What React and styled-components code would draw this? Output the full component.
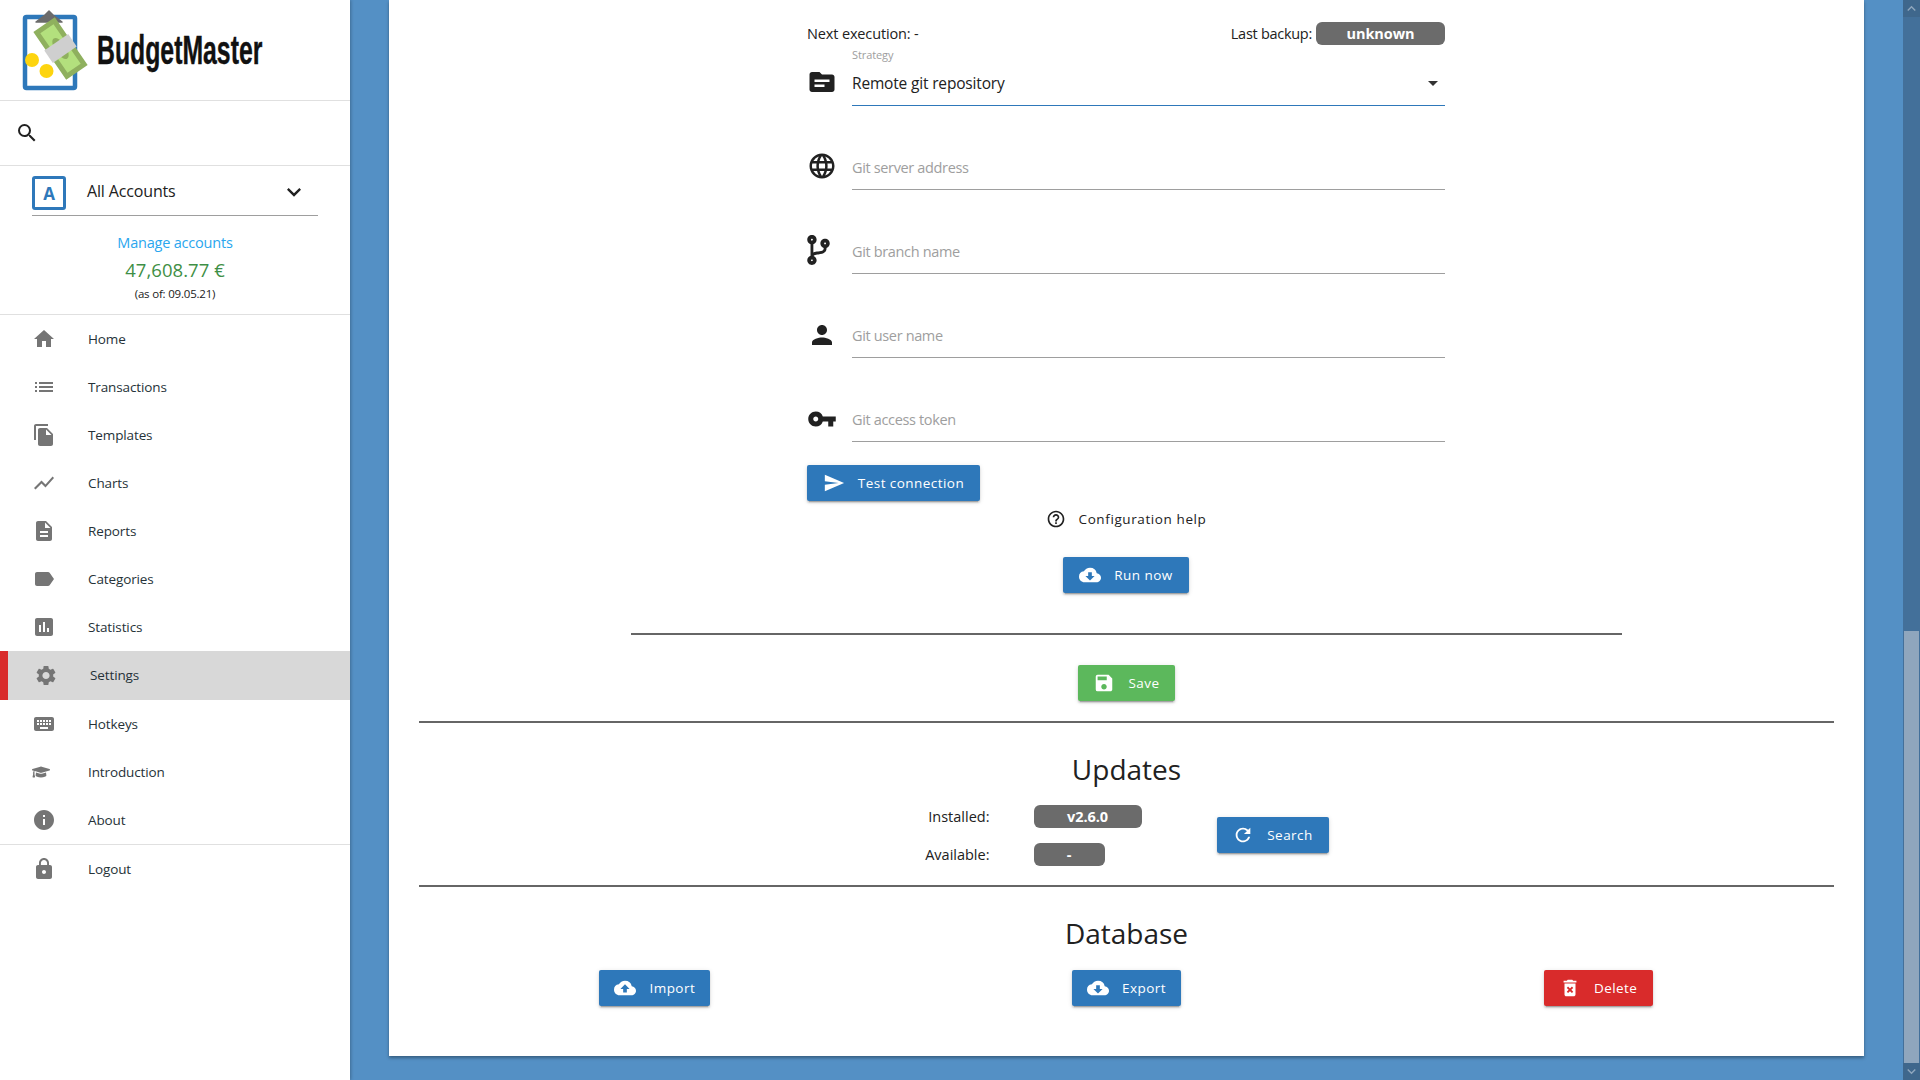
import React from "react";
import styled, { createGlobalStyle } from "styled-components";
import {
  MdHome, MdList, MdFileCopy, MdShowChart, MdDescription, MdLabel, MdAssessment, MdSettings,
  MdKeyboard, MdInfo, MdLock, MdTopic, MdLanguage, MdPerson, MdVpnKey, MdSend,
  MdHelpOutline, MdCloudDownload, MdCloudUpload, MdSave, MdRefresh, MdDeleteForever, MdSearch,
  MdExpandMore, MdArrowDropDown, MdKeyboardArrowUp, MdKeyboardArrowDown,
} from "react-icons/md";
import { FaCodeBranch, FaGraduationCap } from "react-icons/fa";

const Global = createGlobalStyle`
  html, body { margin: 0; padding: 0; height: 100%; overflow: hidden; }
  body { font-family: "Open Sans", "Noto Sans", sans-serif; color: #212121; }
  * { box-sizing: border-box; }
`;

const Page = styled.div`
  display: flex;
  width: 1920px;
  height: 1080px;
  overflow: hidden;
  background: #5490c5;
`;

const Sidebar = styled.aside`
  width: 350px;
  flex: none;
  background: #fff;
  display: flex;
  flex-direction: column;
  box-shadow: 1px 0 3px rgba(0, 0, 0, 0.25);
  z-index: 1;
`;

const LogoBar = styled.div`
  height: 101px;
  flex: none;
  display: flex;
  align-items: flex-start;
  border-bottom: 1px solid #e0e0e0;
`;

const LogoName = styled.span`
  font-family: "Liberation Sans", sans-serif;
  font-weight: 700;
  font-size: 40px;
  line-height: 40px;
  color: #111;
  margin: 30px 0 0 -23px;
  transform: scaleX(0.62);
  transform-origin: left center;
  white-space: nowrap;
  -webkit-text-stroke: 0.4px #111;
`;

const SearchBar = styled.div`
  height: 65px;
  flex: none;
  display: flex;
  align-items: center;
  padding-left: 15px;
  border-bottom: 1px solid #e0e0e0;
  color: #212121;
`;

const AccountBox = styled.div`
  height: 149px;
  flex: none;
  border-bottom: 1px solid #e0e0e0;
  display: flex;
  flex-direction: column;
  align-items: center;
`;

const AccountSelect = styled.div`
  width: 286px;
  height: 40px;
  margin-top: 10px;
  display: flex;
  align-items: flex-start;
  border-bottom: 1px solid #9e9e9e;
`;

const AccountBadge = styled.div`
  width: 34px;
  height: 34px;
  border: 3px solid #2e78ba;
  border-radius: 3px;
  color: #2e78ba;
  font-weight: 700;
  font-size: 17px;
  display: flex;
  align-items: center;
  justify-content: center;
`;

const AccountName = styled.span`
  margin-left: 21px;
  font-size: 16px;
  letter-spacing: -0.15px;
  line-height: 30px;
  flex: 1;
`;

const AccountChevron = styled.span`
  display: flex;
  margin: 2px 10px 0 0;
`;

const ManageLink = styled.a`
  margin-top: 17px;
  font-size: 14.5px;
  line-height: 20px;
  color: #2aa6ee;
  letter-spacing: -0.2px;
`;

const Balance = styled.div`
  margin-top: 4px;
  font-size: 18.5px;
  line-height: 26px;
  color: #3f8f46;
  letter-spacing: 0.05px;
`;

const AsOf = styled.div`
  margin-top: 3px;
  font-size: 11.5px;
  line-height: 16px;
  letter-spacing: -0.2px;
`;

const Nav = styled.nav`
  display: flex;
  flex-direction: column;
`;

const NavItem = styled.div`
  height: ${(p) => (p.$active ? "49px" : "48px")};
  display: flex;
  align-items: center;
  padding-left: ${(p) => (p.$active ? "26px" : "32px")};
  padding-bottom: ${(p) => (p.$active ? "1px" : "0")};
  background: ${(p) => (p.$active ? "#d8d8d8" : "transparent")};
  border-left: ${(p) => (p.$active ? "8px solid #d92b2b" : "none")};
  border-top: ${(p) => (p.$divided ? "1px solid #e0e0e0" : "none")};
  color: #757575;
`;

const NavIcon = styled.span`
  width: 24px;
  flex: none;
  display: flex;
  justify-content: ${(p) => (p.$small ? "flex-start" : "center")};
`;

const NavLabel = styled.span`
  margin-left: 32px;
  font-size: 13.5px;
  letter-spacing: -0.12px;
  font-weight: 500;
  color: #263238;
`;

const Main = styled.main`
  flex: 1;
  min-width: 0;
  height: 1080px;
  padding: 0 39px 24px;
`;

const Card = styled.section`
  height: 100%;
  background: #fff;
  padding: 22px 30px 0;
  box-shadow: 0 2px 3px rgba(0, 0, 0, 0.35);
  display: flex;
  flex-direction: column;
  align-items: center;
`;

const Form = styled.div`
  width: 638px;
  margin-right: 1px;
  display: flex;
  flex-direction: column;
`;

const StatusRow = styled.div`
  height: 23px;
  display: flex;
  align-items: center;
  justify-content: space-between;
  font-size: 14.5px;
  letter-spacing: -0.28px;
`;

const NextExecution = styled.span`
  letter-spacing: -0.14px;
`;

const LastBackup = styled.div`
  display: flex;
  align-items: center;
  gap: 4px;
`;

const Pill = styled.span`
  display: flex;
  align-items: center;
  justify-content: center;
  width: ${(p) => p.$w}px;
  height: 23px;
  background: #6b6b6b;
  border-radius: 6px;
  color: #fff;
  font-weight: 700;
  font-size: 14.5px;
  letter-spacing: -0.1px;
`;

const Field = styled.div`
  height: 61px;
  margin-top: ${(p) => (p.$first ? 0 : 23)}px;
  display: flex;
  align-items: flex-end;
`;

const FieldIcon = styled.div`
  width: 45px;
  height: ${(p) => p.$h || 50}px;
  flex: none;
  display: flex;
  align-items: flex-start;
  color: #212121;
`;

const BranchIcon = styled(FaCodeBranch)`
  width: 23px;
  height: 30px;
`;

const FieldBody = styled.div`
  flex: 1;
  height: 100%;
  display: flex;
  flex-direction: column;
  justify-content: flex-end;
`;

const FieldLabel = styled.div`
  font-size: 11px;
  color: #9e9e9e;
  line-height: 15px;
  letter-spacing: -0.1px;
  margin-bottom: 1px;
`;

const FieldLine = styled.div`
  height: 43px;
  display: flex;
  align-items: center;
  justify-content: space-between;
  border-bottom: 1px solid ${(p) => (p.$focus ? "#2e78ba" : "#9e9e9e")};
  font-size: ${(p) => (p.$placeholder ? "14.5px" : "15.5px")};
  letter-spacing: ${(p) => (p.$placeholder ? "-0.35px" : "-0.17px")};
  color: ${(p) => (p.$placeholder ? "#9e9e9e" : "#212121")};
  padding-bottom: ${(p) => (p.$placeholder ? "2px" : "3px")};
`;

const Dropdown = styled.span`
  display: flex;
  color: #333;
`;

const Button = styled.button`
  width: ${(p) => p.$w}px;
  height: 36px;
  margin-top: ${(p) => p.$mt ?? 0}px;
  margin-right: ${(p) => p.$shift ?? 0}px;
  padding: 0;
  border: none;
  border-radius: 2px;
  background: ${(p) => p.$bg || "#2e78ba"};
  color: #fff;
  font-family: inherit;
  font-size: 13.5px;
  font-weight: 500;
  letter-spacing: 0.45px;
  display: flex;
  align-items: center;
  justify-content: center;
  gap: 13px;
  box-shadow: 0 2px 2px rgba(0, 0, 0, 0.14), 0 3px 1px -2px rgba(0, 0, 0, 0.2), 0 1px 5px rgba(0, 0, 0, 0.12);
`;

const HelpLink = styled.div`
  height: 36px;
  margin-right: 1px;
  display: flex;
  align-items: center;
  justify-content: center;
  gap: 13px;
  font-size: 13.5px;
  font-weight: 500;
  letter-spacing: 0.6px;
`;

const Divider = styled.hr`
  width: ${(p) => p.$w || "100%"};
  margin: ${(p) => p.$mt}px 0 0;
  border: none;
  flex: none;
  height: 2px;
  background: #666;
`;

const Heading = styled.h2`
  margin: 26px 0 0;
  font-size: 28px;
  font-weight: 400;
  line-height: 40px;
  letter-spacing: 0;
  color: #212121;
`;

const UpdateGrid = styled.div`
  width: 406px;
  margin-top: 16px;
  display: grid;
  grid-template-columns: 66px 153px 187px;
  grid-template-rows: 23px 22px;
  row-gap: 15px;
`;

const UpdateLabel = styled.span`
  font-size: 14.5px;
  letter-spacing: 0;
  line-height: 23px;
  justify-self: end;
  white-space: nowrap;
`;

const PillCell = styled.div`
  margin-left: 44px;
`;

const SearchCell = styled.div`
  grid-row: 1 / span 2;
  grid-column: 3;
  margin: 12px 0 0 74px;
`;

const DatabaseRow = styled.div`
  width: 100%;
  margin-top: 17px;
  display: grid;
  grid-template-columns: repeat(3, 1fr);
  justify-items: center;
`;

const Scrollbar = styled.div`
  width: 17px;
  flex: none;
  display: flex;
  flex-direction: column;
  background: #43709a;
`;

const ScrollButton = styled.div`
  height: 17px;
  flex: none;
  display: flex;
  align-items: center;
  justify-content: center;
  background: #3f678c;
  color: #8fa6bd;
`;

const ScrollTrack = styled.div`
  flex: 1;
`;

const ScrollThumb = styled.div`
  height: 432px;
  flex: none;
  margin: 0 1px;
  background: #8fa6bd;
`;

const Logo = () => (
  <svg width="120" height="100" viewBox="0 0 120 100" style={{ flex: "none" }}>
    <rect x="25" y="17" width="50" height="71" rx="1.5" fill="#fff" stroke="#2e78ba" strokeWidth="4.5" />
    <path d="M36 22 L45 15 L49 11 L53 15 L62 22 Z" fill="#6b6b6b" stroke="#6b6b6b" strokeWidth="1.5" strokeLinejoin="round" />
    <g transform="rotate(-34.5 60.5 48.5)">
      <rect x="50" y="22" width="21" height="53" fill="#b3e07d" stroke="#8fb05e" strokeWidth="5" />
      <ellipse cx="60.5" cy="48.5" rx="5.5" ry="12" fill="#8fb05e" />
      <rect x="46" y="41" width="29" height="15" fill="#cfcfcf" />
    </g>
    <circle cx="32" cy="60" r="7" fill="#fdd40f" />
    <circle cx="46.5" cy="71" r="7" fill="#fdd40f" />
  </svg>
);

const navItems = [
  ["Home", MdHome, 24],
  ["Transactions", MdList, 24],
  ["Templates", MdFileCopy, 24],
  ["Charts", MdShowChart, 24],
  ["Reports", MdDescription, 24],
  ["Categories", MdLabel, 24],
  ["Statistics", MdAssessment, 24],
  ["Settings", MdSettings, 25, true],
  ["Hotkeys", MdKeyboard, 24],
  ["Introduction", FaGraduationCap, 18],
  ["About", MdInfo, 24],
];

export default function App() {
  return (
    <Page>
      <Global />
      <Sidebar>
        <LogoBar>
          <Logo />
          <LogoName>BudgetMaster</LogoName>
        </LogoBar>
        <SearchBar>
          <MdSearch size={24} />
        </SearchBar>
        <AccountBox>
          <AccountSelect>
            <AccountBadge>A</AccountBadge>
            <AccountName>All Accounts</AccountName>
            <AccountChevron>
              <MdExpandMore size={28} color="#212121" />
            </AccountChevron>
          </AccountSelect>
          <ManageLink>Manage accounts</ManageLink>
          <Balance>47,608.77 €</Balance>
          <AsOf>(as of: 09.05.21)</AsOf>
        </AccountBox>
        <Nav>
          {navItems.map(([label, Icon, size, active]) => (
            <NavItem key={label} $active={active}>
              <NavIcon $small={size < 24}>
                <Icon size={size} />
              </NavIcon>
              <NavLabel>{label}</NavLabel>
            </NavItem>
          ))}
          <NavItem $divided>
            <NavIcon>
              <MdLock size={24} />
            </NavIcon>
            <NavLabel>Logout</NavLabel>
          </NavItem>
        </Nav>
      </Sidebar>
      <Main>
        <Card>
          <Form>
            <StatusRow>
              <NextExecution>Next execution: -</NextExecution>
              <LastBackup>
                <span>Last backup:</span>
                <Pill $w={129}>unknown</Pill>
              </LastBackup>
            </StatusRow>
            <Field $first>
              <FieldIcon $h={39}>
                <MdTopic size={30} />
              </FieldIcon>
              <FieldBody>
                <FieldLabel>Strategy</FieldLabel>
                <FieldLine $focus>
                  <span>Remote git repository</span>
                  <Dropdown>
                    <MdArrowDropDown size={24} />
                  </Dropdown>
                </FieldLine>
              </FieldBody>
            </Field>
            <Field>
              <FieldIcon $h={39}>
                <MdLanguage size={30} />
              </FieldIcon>
              <FieldBody>
                <FieldLine $placeholder>Git server address</FieldLine>
              </FieldBody>
            </Field>
            <Field>
              <FieldIcon $h={39}>
                <BranchIcon />
              </FieldIcon>
              <FieldBody>
                <FieldLine $placeholder>Git branch name</FieldLine>
              </FieldBody>
            </Field>
            <Field>
              <FieldIcon $h={38}>
                <MdPerson size={30} />
              </FieldIcon>
              <FieldBody>
                <FieldLine $placeholder>Git user name</FieldLine>
              </FieldBody>
            </Field>
            <Field>
              <FieldIcon $h={38}>
                <MdVpnKey size={30} />
              </FieldIcon>
              <FieldBody>
                <FieldLine $placeholder>Git access token</FieldLine>
              </FieldBody>
            </Field>
            <Button $w={173} $mt={23}>
              <MdSend size={22} />
              Test connection
            </Button>
          </Form>
          <HelpLink>
            <MdHelpOutline size={20} />
            Configuration help
          </HelpLink>
          <Button $w={126} $mt={20} $shift={1}>
            <MdCloudDownload size={22} />
            Run now
          </Button>
          <Divider $w="70%" $mt={40} />
          <Button $w={97} $mt={30} $bg="#5cb85c">
            <MdSave size={22} />
            Save
          </Button>
          <Divider $mt={20} />
          <Heading>Updates</Heading>
          <UpdateGrid>
            <UpdateLabel>Installed:</UpdateLabel>
            <PillCell>
              <Pill $w={108}>v2.6.0</Pill>
            </PillCell>
            <SearchCell>
              <Button $w={112}>
                <MdRefresh size={22} />
                Search
              </Button>
            </SearchCell>
            <UpdateLabel>Available:</UpdateLabel>
            <PillCell>
              <Pill $w={71}>-</Pill>
            </PillCell>
          </UpdateGrid>
          <Divider $mt={20} />
          <Heading>Database</Heading>
          <DatabaseRow>
            <Button $w={111}>
              <MdCloudUpload size={22} />
              Import
            </Button>
            <Button $w={109}>
              <MdCloudDownload size={22} />
              Export
            </Button>
            <Button $w={109} $bg="#d92b2b">
              <MdDeleteForever size={22} />
              Delete
            </Button>
          </DatabaseRow>
        </Card>
      </Main>
      <Scrollbar>
        <ScrollButton>
          <MdKeyboardArrowUp size={17} />
        </ScrollButton>
        <ScrollTrack />
        <ScrollThumb />
        <ScrollButton>
          <MdKeyboardArrowDown size={17} />
        </ScrollButton>
      </Scrollbar>
    </Page>
  );
}
